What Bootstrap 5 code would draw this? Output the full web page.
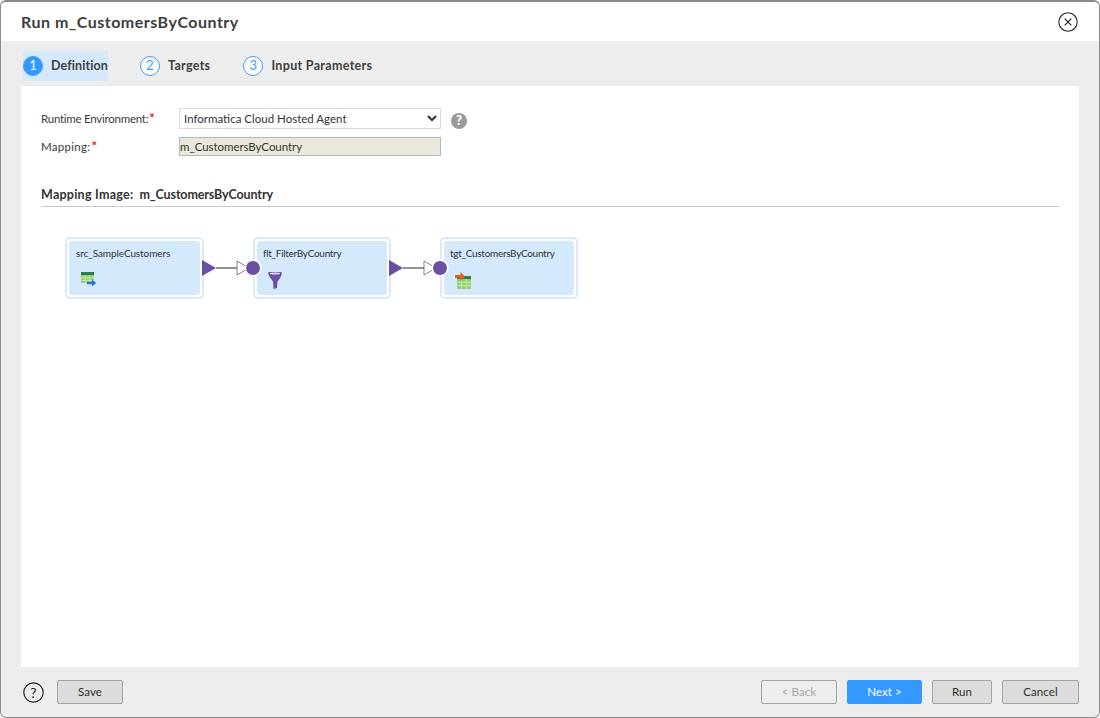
<!DOCTYPE html>
<html lang="en">
<head>
<meta charset="utf-8">
<title>Run m_CustomersByCountry</title>
<link href="https://cdn.jsdelivr.net/npm/bootstrap@5.3.0/dist/css/bootstrap.min.css" rel="stylesheet">
<style>
html,body{height:100%;margin:0;background:#fff;overflow:hidden}
body{font-family:Lato,"Liberation Sans",sans-serif;color:#333;font-size:12px}
.dlg{width:1100px;height:718px;border:1px solid #8c8c8c;border-top-width:2px;border-radius:6px;background:#ededed;overflow:hidden}
.dlg-head{height:39px;background:#fff;padding:0 21px 0 20px;flex:none}
.dlg-title{font-size:16px;font-weight:700;color:#3d3d3d;letter-spacing:.5px;margin:0;line-height:1}
.closer{width:20px;height:20px}
.steps{height:45px;padding:10px 0 5px 22px;flex:none}
.stepper{height:30px;color:#3f3f3f;font-weight:700;font-size:12.5px;letter-spacing:.2px;white-space:nowrap}
.stepper.on{background:#d4e9fb}
.s1{margin-right:32px;width:85px;letter-spacing:.1px}
.s2{margin-right:33px;letter-spacing:.3px}
.s3{letter-spacing:.32px}
.stepnum{width:20px;height:20px;border-radius:50%;border:1px solid #3d9bff;color:#3d9bff;background:#fff;font-weight:400;font-size:13px;margin-right:8px;flex:none}
.stepper.on .stepnum{background:#3399ff;color:#fff}
.pane{margin:0 20px;height:581px;background:#fff;padding:22px 20px 0;flex:none;color:#3b3b3b}
.frow{display:flex;align-items:center}
.flabel{width:138px;flex:none;font-size:11.5px;letter-spacing:-.25px;white-space:nowrap}
.flabel-wide{letter-spacing:.3px}
.req{color:#e0202a;font-weight:700;font-size:13px;line-height:1;margin-left:1px}
.picker{width:262px;height:21px;font-size:11.5px;padding:0;border:1px solid #dcdcdc;border-radius:0;background-color:#fff;color:#333;font-family:inherit}
.ro{width:262px;height:19px;font-size:11.5px;padding:0;border:1px solid #a7bccd;border-radius:0;background:#ebe8d9;color:#333;font-family:inherit;letter-spacing:-.05px;line-height:17px}
.qmark{width:16px;height:16px;border-radius:50%;background:#9a9a9a;color:#fff;font-weight:900;font-size:13px;margin-left:10px;margin-top:4px;line-height:1}
.sect{margin-top:30px;height:21px;border-bottom:1px solid #c9c9c9;font-weight:700;font-size:12.5px;color:#333;white-space:nowrap}
.sect-a{letter-spacing:.25px}
.sect-b{letter-spacing:-.12px}
.canvas{position:relative;margin:30px 0 0 24px;gap:49px;width:700px}
.wf{position:relative;height:62px;width:138px;border:2px solid #d9ebfa;border-radius:5px;padding:2px;background:#fff;flex:none}
.wf-first{width:139px}
.wf-in{height:54px;background:#d4e9fb;border-radius:3px;padding:5px 0 0 6px;font-size:10px;color:#333;line-height:14px;letter-spacing:-.3px}
.wf-first .wf-in{padding-left:7px;letter-spacing:-.1px}
.wf-ico{display:block;margin-top:12px}
.links{position:absolute;left:0;top:0;pointer-events:none;overflow:visible}
.foot{flex:1;padding:0 20px 0 22px}
.cmd{height:24px;border:1px solid #a3a3a3;border-radius:2px;background:#dcdcdc;color:#2f2f2f;font-size:11.5px;padding:0;font-family:inherit;letter-spacing:.1px}
.cmd:disabled{background:#ededed;color:#a8a8a8;border-color:#a3a3a3;opacity:1}
.cmd-go{background:#3399ff;border-color:#3399ff;color:#fff}
.cmds{gap:10px}
.w-save{width:66px}.w-back{width:76px}.w-next{width:75px}.w-run{width:60px}.w-cancel{width:77px}
.hlp{width:21px;height:21px;margin-right:13px}
</style>
</head>
<body>
<div class="dlg d-flex flex-column">
  <div class="dlg-head d-flex align-items-center justify-content-between">
    <h1 class="dlg-title">Run m_CustomersByCountry</h1>
    <svg class="closer" viewBox="0 0 20 20" aria-label="Close"><circle cx="10" cy="10" r="9.2" fill="none" stroke="#222" stroke-width="1.1"/><path d="M6.7 6.7l6.6 6.6M13.3 6.7l-6.6 6.6" stroke="#222" stroke-width="1.2"/></svg>
  </div>
  <div class="steps d-flex">
    <div class="stepper on s1 d-flex align-items-center"><span class="stepnum d-flex align-items-center justify-content-center">1</span>Definition</div>
    <div class="stepper s2 d-flex align-items-center"><span class="stepnum d-flex align-items-center justify-content-center">2</span>Targets</div>
    <div class="stepper s3 d-flex align-items-center"><span class="stepnum d-flex align-items-center justify-content-center">3</span>Input Parameters</div>
  </div>
  <div class="pane">
    <div class="frow">
      <div class="flabel">Runtime Environment:<span class="req">*</span></div>
      <select class="picker"><option>Informatica Cloud Hosted Agent</option></select>
      <span class="qmark d-flex align-items-center justify-content-center">?</span>
    </div>
    <div class="frow mt-2">
      <div class="flabel flabel-wide">Mapping:<span class="req">*</span></div>
      <div class="ro">m_CustomersByCountry</div>
    </div>
    <div class="sect"><span class="sect-a">Mapping Image:</span>&nbsp; <span class="sect-b">m_CustomersByCountry</span></div>
    <div class="canvas d-flex">
      <div class="wf wf-first"><div class="wf-in">src_SampleCustomers
        <svg class="wf-ico" width="20" height="16" viewBox="0 0 20 16">
          <rect x="5" y="0" width="13" height="3" fill="#2f7d46"/><rect x="5" y="3" width="13" height="8" fill="#8fd068"/>
          <path d="M5 5.700h13M5 8.400h13M9.300 3v8M13.700 3v8" stroke="#d9efc9" stroke-width=".8"/>
          <path d="M11 9.700h5V7.500l4.200 3.500-4.200 3.500v-2.200h-5z" fill="#2a74d6"/>
        </svg></div></div>
      <div class="wf"><div class="wf-in">flt_FilterByCountry
        <svg class="wf-ico" width="20" height="17" viewBox="0 0 20 17">
          <path d="M6 0h12q1 0 .8 1.500Q18.300 5 14.500 9.500L14 16l-3.500 1-.5-7.500Q6 5 5.200 1.500 5 0 6 0z" fill="#6b4fa0"/>
          <ellipse cx="12" cy="1.500" rx="5.200" ry="1" fill="#e6dff2"/>
        </svg></div></div>
      <div class="wf"><div class="wf-in">tgt_CustomersByCountry
        <svg class="wf-ico" width="22" height="17" viewBox="0 0 22 17">
          <rect x="7" y="4" width="14" height="3" fill="#2f7d46"/><rect x="7" y="7" width="14" height="10" fill="#8fd068"/>
          <path d="M7 10.300h14M7 13.600h14M11.600 7v10M16.200 7v10" stroke="#d9efc9" stroke-width=".8"/>
          <path d="M5 3h5.500V0L15 4.500 10.500 9V6H5z" fill="#ec5f1c"/>
        </svg></div></div>
      <svg class="links" width="520" height="62" viewBox="0 0 520 62">
        <g>
          <path d="M137 23l14 8-14 8z" fill="#6b4fa0"/>
          <path d="M151 31h21" stroke="#777" stroke-width="1.6"/>
          <path d="M172 24l12 7-12 7z" fill="#fff" stroke="#666" stroke-width=".8"/>
          <circle cx="188" cy="31" r="8.500" fill="#fff"/><circle cx="188" cy="31" r="7" fill="#6b4fa0"/>
        </g>
        <g transform="translate(187 0)">
          <path d="M137 23l14 8-14 8z" fill="#6b4fa0"/>
          <path d="M151 31h21" stroke="#777" stroke-width="1.6"/>
          <path d="M172 24l12 7-12 7z" fill="#fff" stroke="#666" stroke-width=".8"/>
          <circle cx="188" cy="31" r="8.500" fill="#fff"/><circle cx="188" cy="31" r="7" fill="#6b4fa0"/>
        </g>
      </svg>
    </div>
  </div>
  <div class="foot d-flex align-items-center">
    <svg class="hlp" viewBox="0 0 21 21" aria-label="Help"><circle cx="10.500" cy="10.500" r="9.700" fill="none" stroke="#222" stroke-width="1.200"/><text x="10.500" y="15.500" text-anchor="middle" font-size="14" font-family="Lato" fill="#222">?</text></svg>
    <button class="cmd w-save" type="button">Save</button>
    <div class="ms-auto d-flex cmds">
      <button class="cmd w-back" type="button" disabled>&lt; Back</button>
      <button class="cmd cmd-go w-next" type="button">Next &gt;</button>
      <button class="cmd w-run" type="button">Run</button>
      <button class="cmd w-cancel" type="button">Cancel</button>
    </div>
  </div>
</div>
<script src="https://cdn.jsdelivr.net/npm/bootstrap@5.3.0/dist/js/bootstrap.bundle.min.js"></script>
</body>
</html>
